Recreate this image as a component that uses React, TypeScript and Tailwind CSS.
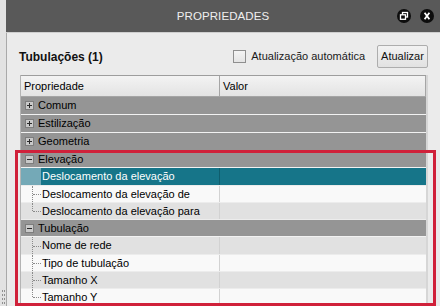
import React from "react";

type Row =
  | { kind: "group"; label: string; open: boolean; h: string }
  | { kind: "item"; label: string; bg: string; h: string; last?: boolean; selected?: boolean };

const rows: Row[] = [
  { kind: "group", label: "Comum", open: false, h: "h-[18px]" },
  { kind: "group", label: "Estilização", open: false, h: "h-[18px]" },
  { kind: "group", label: "Geometria", open: false, h: "h-[18px]" },
  { kind: "group", label: "Elevação", open: true, h: "h-[17px]" },
  { kind: "item", label: "Deslocamento da elevação", bg: "bg-[#167589]", h: "h-[18px]", selected: true },
  { kind: "item", label: "Deslocamento da elevação de", bg: "bg-[#f9f9f9]", h: "h-[17px]" },
  { kind: "item", label: "Deslocamento da elevação para", bg: "bg-[#e1e1e1]", h: "h-[17px]", last: true },
  { kind: "group", label: "Tubulação", open: true, h: "h-[17px]" },
  { kind: "item", label: "Nome de rede", bg: "bg-[#e1e1e1]", h: "h-[18px]" },
  { kind: "item", label: "Tipo de tubulação", bg: "bg-[#f9f9f9]", h: "h-[17px]" },
  { kind: "item", label: "Tamanho X", bg: "bg-[#e1e1e1]", h: "h-[17px]" },
  { kind: "item", label: "Tamanho Y", bg: "bg-[#f9f9f9]", h: "h-[17px]", last: true },
];

function ToggleBox({ open }: { open: boolean }) {
  return (
    <svg width="9" height="9" viewBox="0 0 9 9" className="shrink-0">
      <rect x="0.5" y="0.5" width="8" height="8" fill="#c9c9c9" stroke="#7d7d7d" />
      <path d="M2 4.5h5" stroke="#2a2a2a" />
      {!open && <path d="M4.5 2v5" stroke="#2a2a2a" />}
    </svg>
  );
}

function GroupRow({ label, open, h }: { label: string; open: boolean; h: string }) {
  return (
    <div className={`${h} flex items-center bg-[#959595] border-b border-[#f2f2f2] pl-[4px] gap-[4px] text-black`}>
      <ToggleBox open={open} />
      <span>{label}</span>
    </div>
  );
}

function ItemRow({ row }: { row: Extract<Row, { kind: "item" }> }) {
  return (
    <div className={`${row.h} flex border-b border-[#ececec] ${row.bg}`}>
      <div className={`relative w-[20px] shrink-0 ${row.selected ? "bg-[#74a9b7]" : ""}`}>
        {!row.selected && (
          <>
            <div
              className={`absolute left-[11px] top-0 border-l border-dotted border-[#8a8a8a] ${row.last ? "h-1/2" : "h-full"}`}
            />
            <div className="absolute left-[12px] top-1/2 w-[8px] border-t border-dotted border-[#8a8a8a]" />
          </>
        )}
      </div>
      <div
        className={`w-[179px] shrink-0 flex items-center pl-[1px] border-r ${
          row.selected ? "text-white border-[#0f5d6d]" : "text-black border-[#d2d2d2]"
        }`}
      >
        {row.label}
      </div>
      <div className="flex-1" />
    </div>
  );
}

export default function App() {
  return (
    <div className="w-[440px] h-[306px] flex overflow-hidden relative bg-[#ebebeb] text-[11px] font-['Liberation_Sans',Arial,sans-serif]">
      {/* splitter */}
      <div className="w-[6px] shrink-0 bg-[#e2e2e2] flex flex-col justify-end items-center gap-[2px] pb-[2px]">
        {[0, 1, 2, 3].map((i) => (
          <div key={i} className="flex gap-[1px]">
            <div className="w-[1px] h-[2px] bg-[#8f8f8f]" />
            <div className="w-[1px] h-[2px] bg-[#8f8f8f]" />
          </div>
        ))}
      </div>

      <div className="flex-1 flex flex-col">
        {/* title bar */}
        <div className="h-[33px] shrink-0 bg-[#595959] border-b border-[#cfcfcf] flex items-center relative">
          <div className="flex-1 text-center text-[#efefef] text-[11.5px] tracking-[0.1px] pt-[1px]">PROPRIEDADES</div>
          <div className="absolute right-[6px] top-[9px] flex gap-[9px]">
            <svg width="14" height="14" viewBox="0 0 14 14">
              <circle cx="7" cy="7" r="7" fill="#0d0d0d" />
              <rect x="5.5" y="3.5" width="5" height="4.5" fill="none" stroke="#fff" strokeWidth="1.3" />
              <rect x="3.5" y="5.8" width="5" height="4.5" fill="#0d0d0d" stroke="#fff" strokeWidth="1.3" />
            </svg>
            <svg width="14" height="14" viewBox="0 0 14 14">
              <circle cx="7" cy="7" r="7" fill="#0d0d0d" />
              <path d="M4.6 3.8L9.4 10.2M9.4 3.8L4.6 10.2" stroke="#fff" strokeWidth="1.8" />
            </svg>
          </div>
        </div>

        {/* body */}
        <div className="flex-1 flex flex-col border-l border-[#a9a9a9] pl-[12px] pr-[12px] pt-[12px]">
          <div className="h-[23px] flex items-center">
            <span className="font-bold text-[12px] text-[#111]">Tubulações (1)</span>
            <div className="flex-1" />
            <div className="w-[13px] h-[13px] border border-[#8f8f8f] bg-gradient-to-b from-[#f4f4f4] to-[#e4e4e4]" />
            <span className="ml-[5px] text-[#1a1a1a]">Atualização automática</span>
            <button className="ml-[12px] w-[51px] h-[23px] rounded-[2px] border border-[#adadad] bg-gradient-to-b from-[#f2f2f2] to-[#e2e2e2] text-[#111]">
              Atualizar
            </button>
          </div>

          {/* property grid */}
          <div className="mt-[7px] ml-[1px] flex flex-col border-l border-[#b4b4b4] border-r-2 border-r-[#d6d6d6]">
            <div className="h-[22px] flex border-t border-[#9d9d9d] border-b border-b-[#a5a5a5] bg-gradient-to-b from-[#f3f3f3] to-[#e3e3e3] text-black">
              <div className="w-[199px] shrink-0 flex items-center pl-[3px] border-r border-[#a5a5a5]">Propriedade</div>
              <div className="flex-1 flex items-center pl-[3px] border-r border-[#a5a5a5]">Valor</div>
            </div>
            {rows.map((r) =>
              r.kind === "group" ? (
                <GroupRow key={r.label} label={r.label} open={r.open} h={r.h} />
              ) : (
                <ItemRow key={r.label} row={r} />
              )
            )}
          </div>
        </div>
      </div>

      {/* annotation box */}
      <div className="absolute left-[15px] top-[150px] w-[421px] h-[156px] border-[3px] border-[#d0213a] pointer-events-none" />
    </div>
  );
}
